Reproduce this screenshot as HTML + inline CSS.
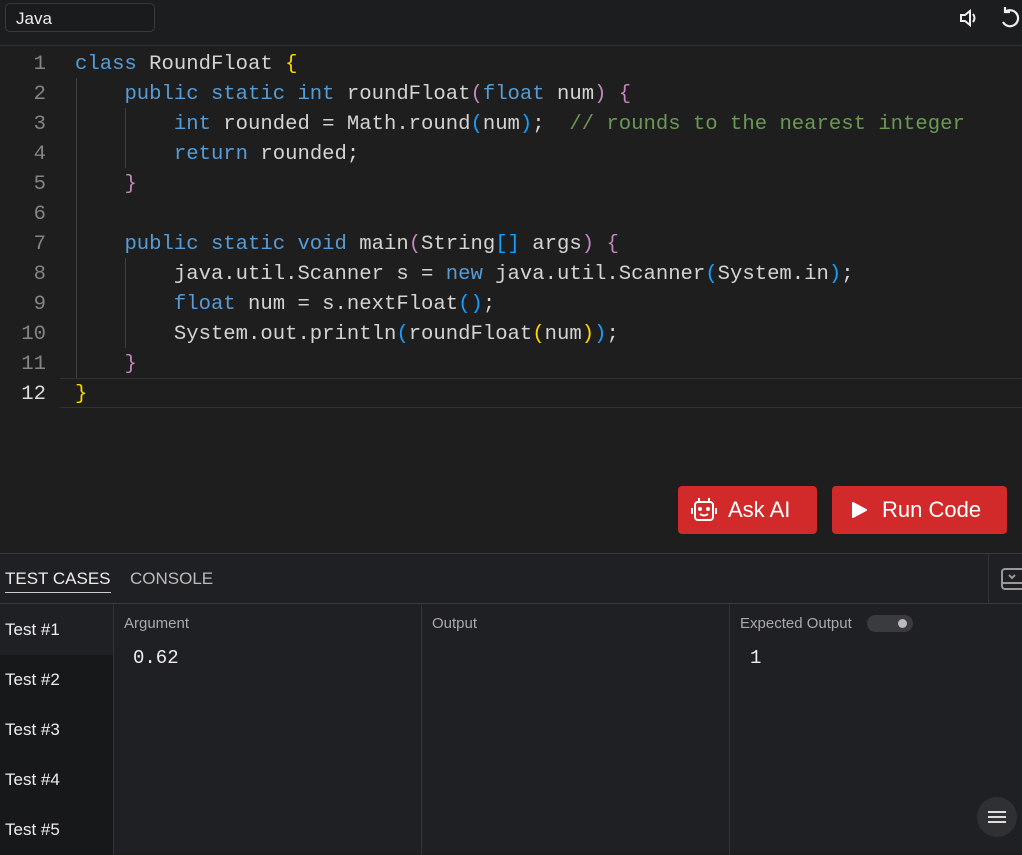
<!DOCTYPE html>
<html><head><style>
*{margin:0;padding:0;box-sizing:border-box}
body{width:1022px;height:853px;background:#1e1e1e;font-family:"Liberation Sans",sans-serif;overflow:hidden;position:relative;color:#ddd}
.top{position:absolute;left:0;top:0;width:1022px;height:46px;background:#1c1d1f;border-bottom:1px solid #333}
.sel{position:absolute;left:5px;top:3px;width:150px;height:29px;border:1px solid #3a3a3a;border-radius:5px;background:#1a1b1d;color:#eee;font-size:17px;padding:5px 10px}
.code{position:absolute;left:0;top:50px;font-family:"Liberation Mono",monospace;font-size:20.6px}
.ln{position:absolute;left:0;width:46px;text-align:right;color:#858585;height:30px;line-height:30px}
.cl{position:absolute;left:75px;white-space:pre;height:30px;line-height:30px;color:#d4d4d4}
.k{color:#569cd6}.p{color:#c586c0}.y{color:#ffd700}.b{color:#179fff}.c{color:#6a9955}
.guide{position:absolute;width:1px;background:#404040}
.hl{position:absolute;left:60px;top:378px;width:962px;height:30px;border-top:1px solid #333;border-bottom:1px solid #333}
.btn{position:absolute;top:486px;height:48px;background:#d22a2a;border-radius:4px;color:#fff;font-size:22px;display:flex;align-items:center}
.bottom{position:absolute;left:0;top:553px;width:1022px;height:300px;background:#1f2023;border-top:1px solid #3a3a3a}
.tabs{height:50px;border-bottom:1px solid #3a3a3a;position:relative}
.tab{position:absolute;top:15px;font-size:17px;color:#bbb}
.side{position:absolute;left:0;top:51px;width:113px;height:250px;background:#17181a}
.t{height:50px;line-height:50px;padding-left:5px;font-size:17px;color:#eee}
.col{position:absolute;top:51px;height:250px;border-left:1px solid #333}
.lbl{position:absolute;top:10px;font-size:15px;color:#aaa}
.val{position:absolute;top:42px;font-family:"Liberation Mono",monospace;font-size:19px;color:#eee}
</style></head><body>
<div class="top"><div class="sel">Java</div>
<svg style="position:absolute;left:958px;top:7px" width="22" height="22" viewBox="0 0 22 22" fill="none" stroke="#eee" stroke-width="2"><path d="M3 8h4l5-4v14l-5-4H3z"/><path d="M15 7q3 4 0 8"/></svg>
<svg style="position:absolute;left:998px;top:6px" width="24" height="24" viewBox="0 0 24 24" fill="none" stroke="#eee" stroke-width="2.2"><path d="M7 6A8 8 0 1 1 5 16"/><path d="M7 1v5h5"/></svg>
</div>
<div class="hl"></div>
<div class="guide" style="left:76px;top:78px;height:300px"></div>
<div class="guide" style="left:125px;top:108px;height:60px"></div>
<div class="guide" style="left:125px;top:258px;height:90px"></div>
<div class="code">
<div class="ln" style="top:0">1</div><div class="cl" style="top:0"><span class="k">class</span> RoundFloat <span class="y">{</span></div>
<div class="ln" style="top:30px">2</div><div class="cl" style="top:30px">    <span class="k">public static int</span> roundFloat<span class="p">(</span><span class="k">float</span> num<span class="p">)</span> <span class="p">{</span></div>
<div class="ln" style="top:60px">3</div><div class="cl" style="top:60px">        <span class="k">int</span> rounded = Math.round<span class="b">(</span>num<span class="b">)</span>;  <span class="c">// rounds to the nearest integer</span></div>
<div class="ln" style="top:90px">4</div><div class="cl" style="top:90px">        <span class="k">return</span> rounded;</div>
<div class="ln" style="top:120px">5</div><div class="cl" style="top:120px">    <span class="p">}</span></div>
<div class="ln" style="top:150px">6</div>
<div class="ln" style="top:180px">7</div><div class="cl" style="top:180px">    <span class="k">public static void</span> main<span class="p">(</span>String<span class="b">[]</span> args<span class="p">)</span> <span class="p">{</span></div>
<div class="ln" style="top:210px">8</div><div class="cl" style="top:210px">        java.util.Scanner s = <span class="k">new</span> java.util.Scanner<span class="b">(</span>System.in<span class="b">)</span>;</div>
<div class="ln" style="top:240px">9</div><div class="cl" style="top:240px">        <span class="k">float</span> num = s.nextFloat<span class="b">()</span>;</div>
<div class="ln" style="top:270px">10</div><div class="cl" style="top:270px">        System.out.println<span class="b">(</span>roundFloat<span class="y">(</span>num<span class="y">)</span><span class="b">)</span>;</div>
<div class="ln" style="top:300px">11</div><div class="cl" style="top:300px">    <span class="p">}</span></div>
<div class="ln" style="top:330px;color:#ddd">12</div><div class="cl" style="top:330px"><span class="y">}</span></div>
</div>
<div class="btn" style="left:678px;width:139px"><svg style="margin:0 10px 0 12px" width="28" height="28" viewBox="0 0 28 28" fill="none" stroke="#fff" stroke-width="2"><rect x="5" y="6" width="18" height="18" rx="3"/><path d="M9 2v4M19 2v4M2 12v6M26 12v6"/><circle cx="10" cy="13" r="1" fill="#fff"/><circle cx="18" cy="13" r="1" fill="#fff"/><path d="M10 18q4 3 8 0"/></svg>Ask AI</div>
<div class="btn" style="left:832px;width:175px"><svg style="margin:0 14px 0 18px" width="18" height="18" viewBox="0 0 18 18"><path d="M3 2L16 9L3 16Z" fill="#fff" stroke="#fff" stroke-linejoin="round" stroke-width="2"/></svg>Run Code</div>
<div class="bottom">
<div class="tabs"><div class="tab" style="left:5px;color:#eee;border-bottom:1px solid #ccc;padding-bottom:3px">TEST CASES</div><div class="tab" style="left:130px">CONSOLE</div>
<div style="position:absolute;left:988px;top:0;height:50px;border-left:1px solid #333;width:34px"></div>
<svg style="position:absolute;left:1000px;top:13px" width="22" height="24" viewBox="0 0 22 24" fill="none" stroke="#999" stroke-width="2"><rect x="2" y="2" width="22" height="20" rx="3"/><path d="M2 16h20M9 8l3 3 3-3"/></svg>
</div>
<div class="side"><div class="t" style="background:#1f2023">Test #1</div><div class="t">Test #2</div><div class="t">Test #3</div><div class="t">Test #4</div><div class="t">Test #5</div></div>
<div class="col" style="left:113px;width:308px"><div class="lbl" style="left:10px">Argument</div><div class="val" style="left:19px">0.62</div></div>
<div class="col" style="left:421px;width:308px"><div class="lbl" style="left:10px">Output</div></div>
<div class="col" style="left:729px;width:293px"><div class="lbl" style="left:10px">Expected Output</div>
<div style="position:absolute;left:137px;top:10px;width:46px;height:17px;border-radius:9px;background:#3a3b3e"><div style="position:absolute;right:6px;top:4px;width:9px;height:9px;border-radius:50%;background:#bbb"></div></div>
<div class="val" style="left:20px">1</div></div>
<div style="position:absolute;left:977px;top:243px;width:40px;height:40px;border-radius:50%;background:#2f3033"></div>
<svg style="position:absolute;left:987px;top:254px" width="20" height="18" viewBox="0 0 20 18" stroke="#ddd" stroke-width="2"><path d="M1 4h18M1 9h18M1 14h18"/></svg>
</div>
</body></html>
